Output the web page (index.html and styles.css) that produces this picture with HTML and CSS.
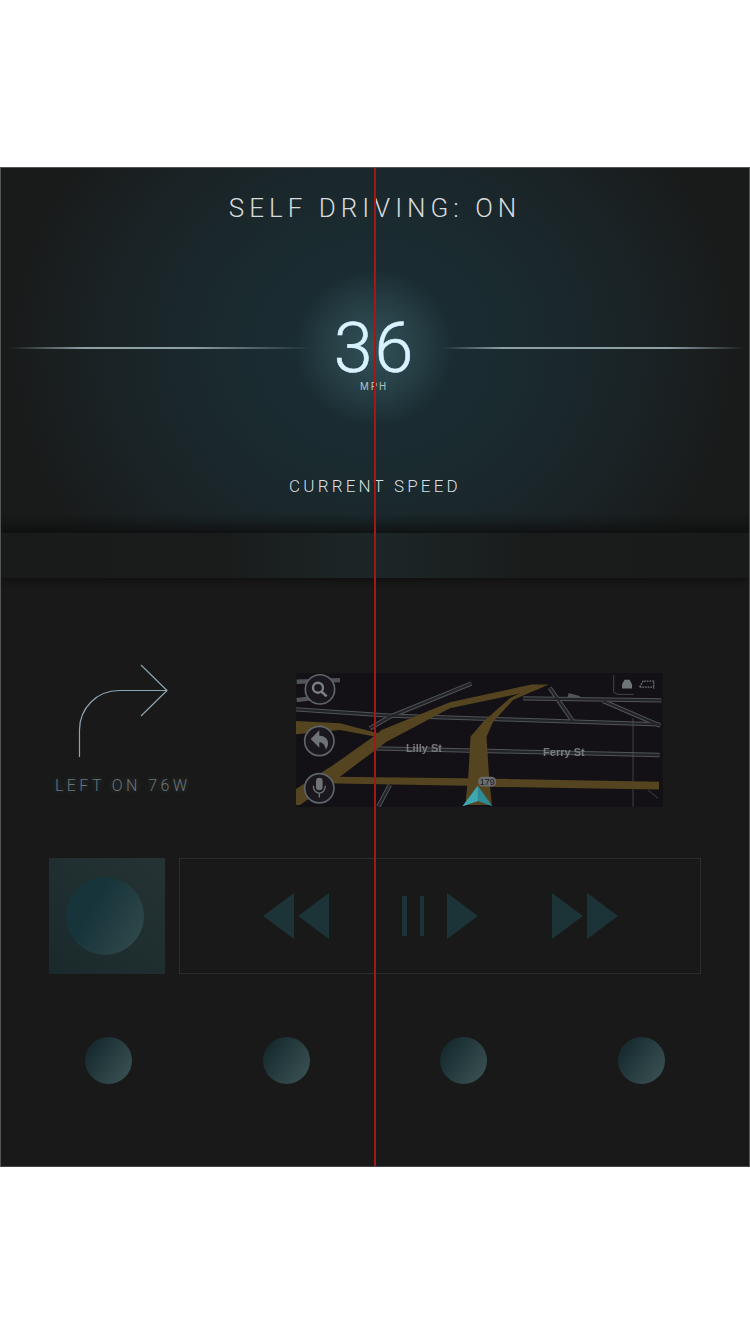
FILE: index.html
```html
<!DOCTYPE html>
<html lang="en">
<head>
    <meta charset="UTF-8">
    <meta name="viewport" content="width=device-width, initial-scale=1.0">
    <title>Self Driving Dashboard</title>
    <link rel="stylesheet" href="styles.css">
</head>
<body>
    <div class="screen">
        <section class="speed">
            <h1 class="status">SELF DRIVING: ON</h1>
            <div class="gauge">
                <div class="rule rule-left"></div>
                <div class="reading">36</div>
                <div class="rule rule-right"></div>
            </div>
            <div class="unit">MPH</div>
            <div class="caption">CURRENT SPEED</div>
        </section>
        <div class="band"></div>

        <section class="nav-row">
            <div class="turn">
                <svg class="turn-arrow" width="100" height="96" viewBox="0 0 100 96">
                    <path d="M10.500 93V66C10.500 44 28 26.500 50 26.500H98M72 1L98 26.500L72 52" fill="none" stroke="#8ba5b3" stroke-width="1.200"/>
                </svg>
                <div class="turn-label">LEFT ON 76W</div>
            </div>
            <svg class="map" width="367" height="134" viewBox="18 24 1102 402">
                <rect x="18" y="24" width="1102" height="402" fill="#131116"/>
                <g fill="none" stroke="#505357" stroke-width="13">
                    <path d="M18 133L300 152L1110 178"/>
                    <path d="M240 190L300 155L545 55"/>
                    <path d="M255 250L1110 270"/>
                    <path d="M700 100L1115 106"/>
                    <path d="M780 68L850 170"/>
                    <path d="M940 108L1112 182"/>
                    <path d="M835 90L870 100"/>
                    <path d="M20 50L150 45M20 105L60 100"/>
                    <path d="M300 360L265 425"/>
                </g>
                <g fill="none" stroke="#232428" stroke-width="7">
                    <path d="M18 133L300 152L1110 178"/>
                    <path d="M240 190L300 155L545 55"/>
                    <path d="M255 250L1110 270"/>
                    <path d="M700 100L1115 106"/>
                    <path d="M780 68L850 170"/>
                    <path d="M940 108L1112 182"/>
                    <path d="M300 360L265 425"/>
                </g>
                <path d="M1030 160V425M1075 375L1105 400" fill="none" stroke="#55585c" stroke-width="2"/>
                <g fill="#54441f">
                    <path d="M18 372L130 300L250 215L275 195L480 112L725 58H775L740 75L480 130L290 230L150 335L30 420H18Z"/>
                    <path d="M18 168L150 175L265 205L258 215L150 195L18 208Z"/>
                    <path d="M130 335L530 340L1108 350V374L620 366L530 362L100 355Z"/>
                    <path d="M775 58L730 65L660 100L580 170L542 215L535 340L526 420H606L598 340L590 215L610 170L670 105Z"/>
                </g>
                <g fill="#1a181e" stroke="#5f656a" stroke-width="5">
                    <circle cx="90" cy="73" r="44"/>
                    <circle cx="88" cy="228" r="44"/>
                    <circle cx="88" cy="370" r="44"/>
                </g>
                <circle cx="84" cy="68" r="15" fill="none" stroke="#7c8084" stroke-width="7"/>
                <path d="M95 80L110 94" stroke="#7c8084" stroke-width="8"/>
                <path d="M62 222L88 196V212C112 212 122 232 108 254C104 238 98 232 88 232V248Z" fill="#6f7377"/>
                <rect x="78" y="338" width="20" height="38" rx="10" fill="#6f7377"/>
                <path d="M70 362C70 392 106 392 106 362M88 384V398" fill="none" stroke="#6f7377" stroke-width="4"/>
                <path d="M972 30V82L985 88H1032" fill="none" stroke="#5a5e62" stroke-width="2"/>
                <path d="M997 58L1004 44H1020L1027 58V70H997Z" fill="#70757a"/>
                <path d="M1050 66L1060 48H1092V70M1050 66H1092" fill="none" stroke="#70757a" stroke-width="4" stroke-dasharray="5 3"/>
                <text class="map-street" x="348" y="262">Lilly St</text>
                <text class="map-street" x="760" y="272">Ferry St</text>
                <rect x="565" y="335" width="54" height="30" rx="14" fill="#6a6c70"/>
                <text class="map-shield" x="592" y="360">179</text>
                <path d="M564 362L608 424L564 408L518 424Z" fill="#2f8a95"/>
                <path d="M564 362L564 408L518 424Z" fill="#3fa7b2"/>
            </svg>
        </section>

        <section class="player-row">
            <div class="album"><div class="album-disc"></div></div>
            <div class="transport">
                <svg width="66" height="46" viewBox="0 0 66 46">
                    <path d="M0 23L31 0V46ZM35 23L66 0V46Z"/>
                </svg>
                <svg width="76" height="46" viewBox="0 0 76 46">
                    <path d="M0 3H5V43H0ZM18 3H22V43H18ZM45 0L76 23L45 46Z"/>
                </svg>
                <svg class="skip-next" width="66" height="46" viewBox="0 0 66 46">
                    <path d="M0 0L31 23L0 46ZM35 0L66 23L35 46Z"/>
                </svg>
            </div>
        </section>

        <section class="button-row">
            <div class="round-button"></div>
            <div class="round-button"></div>
            <div class="round-button"></div>
            <div class="round-button"></div>
        </section>

        <div class="center-line"></div>
    </div>
</body>
</html>
```

FILE: styles.css
```css
body {
    margin: 0;
    padding-top: 167px;
    background-color: #ffffff;
    font-family: Roboto, "Liberation Sans", Arial, sans-serif;
}
.screen {
    position: relative;
    box-sizing: border-box;
    width: 750px;
    height: 1000px;
    background-color: #191919;
    border: 1px solid #555555;
    border-bottom-color: #444444;
    overflow: hidden;
}
.speed {
    display: flex;
    flex-direction: column;
    align-items: center;
    box-sizing: border-box;
    height: 365px;
    padding-top: 24px;
    background:
        linear-gradient(to bottom, rgba(14, 15, 15, 0) 345px, rgba(14, 15, 15, 0.7) 364px),
        radial-gradient(circle 78px at 373px 180px, rgba(58, 92, 99, 0.75), rgba(58, 92, 99, 0.35) 60%, rgba(58, 92, 99, 0) 100%),
        radial-gradient(ellipse 380px 340px at 373px 180px, #1a2f35 0%, #1a2b30 35%, #1a2326 70%, #191b1b 95%);
}
.status {
    margin: 0;
    font-size: 26px;
    font-weight: 300;
    line-height: 32px;
    letter-spacing: 5px;
    color: #d8dbdd;
}
.gauge {
    display: flex;
    align-items: center;
    width: 100%;
    margin-top: 91px;
}
.rule {
    flex: 1;
    height: 2px;
}
.rule-left {
    margin-left: 9px;
    background: linear-gradient(to right, rgba(200, 220, 225, 0), #8fa0a4 25%, #8fa0a4 60%, rgba(200, 220, 225, 0));
}
.rule-right {
    margin-right: 5px;
    background: linear-gradient(to right, rgba(200, 220, 225, 0), #8fa0a4 20%, #8fa0a4 75%, rgba(200, 220, 225, 0));
}
.reading {
    box-sizing: border-box;
    width: 130px;
    padding-right: 5px;
    font-size: 70px;
    font-weight: 300;
    line-height: 66px;
    letter-spacing: 2px;
    text-align: center;
    color: #d8f2ff;
    -webkit-text-stroke: 0.6px #d8f2ff;
}
.unit {
    margin-right: 2px;
    font-size: 10px;
    line-height: 12px;
    letter-spacing: 2px;
    color: #aac2c9;
}
.caption {
    margin-top: 83px;
    font-size: 17px;
    font-weight: 300;
    line-height: 20px;
    letter-spacing: 3.200px;
    color: #dadfe0;
}
.band {
    height: 45px;
    background: linear-gradient(to right, #191a1a, #1a1c1c 30%, #1c2627 50%, #1a1c1c 70%, #191a1a);
    box-shadow: 0 2px 8px rgba(0, 0, 0, 0.45);
}
.nav-row {
    display: flex;
    justify-content: space-between;
    align-items: flex-start;
    height: 194px;
    padding: 86px 86px 0 54px;
}
.turn {
    display: flex;
    flex-direction: column;
    align-items: flex-start;
}
.turn-arrow {
    margin: 0 0 0 14px;
    display: block;
}
.turn-label {
    margin-top: 16px;
    font-size: 16px;
    font-weight: 300;
    line-height: 20px;
    letter-spacing: 3.400px;
    white-space: nowrap;
    color: #6b7478;
    text-shadow: 0 0 6px rgba(120, 160, 170, 0.35);
}
.map {
    display: block;
    margin-top: 9px;
    filter: blur(0.5px);
}
.map-street {
    font-family: "Liberation Sans", sans-serif;
    font-size: 33px;
    font-weight: bold;
    fill: #77797d;
}
.map-shield {
    font-family: "Liberation Sans", sans-serif;
    font-size: 27px;
    text-anchor: middle;
    fill: #1a1a1a;
}
.player-row {
    display: flex;
    gap: 14px;
    height: 116px;
    padding-left: 48px;
}
.album {
    display: flex;
    align-items: center;
    justify-content: center;
    box-sizing: border-box;
    width: 116px;
    height: 116px;
    padding-right: 4px;
    background: linear-gradient(40deg, #1a292b, #253335);
}
.album-disc {
    width: 78px;
    height: 78px;
    border-radius: 50%;
    background: linear-gradient(120deg, #17343b 35%, #2d4648 85%);
}
.transport {
    display: flex;
    align-items: center;
    justify-content: center;
    gap: 73px;
    box-sizing: border-box;
    width: 522px;
    height: 116px;
    border: 1px solid #2a2b2b;
}
.transport svg {
    display: block;
    fill: #1c3337;
}
.transport .skip-next {
    margin-left: 1px;
}
.button-row {
    display: flex;
    justify-content: space-between;
    width: 580px;
    margin-top: 63px;
    margin-left: 84px;
}
.round-button {
    width: 47px;
    height: 47px;
    border-radius: 50%;
    background: linear-gradient(125deg, #172b2f 15%, #395052 90%);
}
.center-line {
    position: absolute;
    top: 0;
    bottom: 0;
    left: 373px;
    width: 1.500px;
    background-color: #a01818;
}
```
